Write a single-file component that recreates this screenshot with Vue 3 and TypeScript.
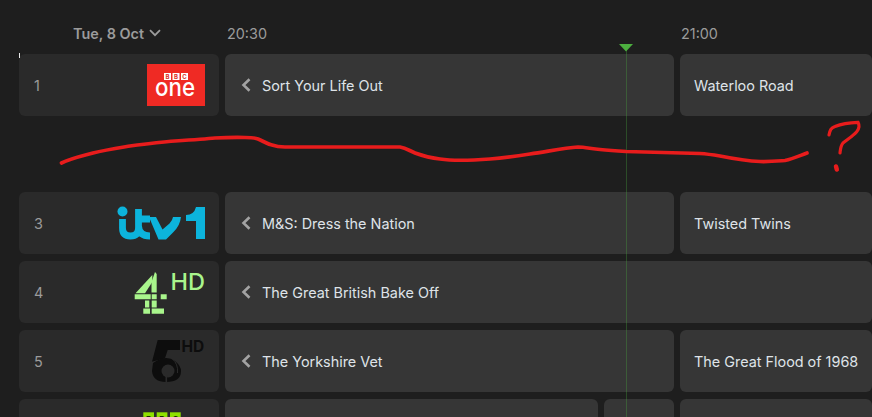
<script setup lang="ts">
interface Prog { title: string; width?: number; grow?: boolean; back?: boolean }
interface Row { num: string; logo: string; progs: Prog[] }
const rows: Row[] = [
  { num: '1', logo: 'one', progs: [{ title: 'Sort Your Life Out', width: 449, back: true }, { title: 'Waterloo Road', grow: true }] },
  { num: '', logo: '', progs: [] },
  { num: '3', logo: 'itv', progs: [{ title: 'M&S: Dress the Nation', width: 449, back: true }, { title: 'Twisted Twins', grow: true }] },
  { num: '4', logo: 'c4', progs: [{ title: 'The Great British Bake Off', grow: true, back: true }] },
  { num: '5', logo: 'c5', progs: [{ title: 'The Yorkshire Vet', width: 449, back: true }, { title: 'The Great Flood of 1968', grow: true }] },
  { num: '', logo: 'bbc', progs: [{ title: '', width: 373 }, { title: '', width: 70 }, { title: '', grow: true }] }
]
</script>

<template>
  <div class="epg">
    <header class="head">
      <div class="date">Tue, 8 Oct
        <svg class="chev" width="12" height="8" viewBox="0 0 12 8"><path d="M1 1.2 6 6.2l5-5" fill="none" stroke="currentColor" stroke-width="1.8" /></svg>
      </div>
      <div class="time">20:30</div>
      <div class="time">21:00</div>
    </header>
    <div class="rows">
      <span class="tick"></span>
      <div class="now">
        <svg width="14" height="8" viewBox="0 0 14 8"><path d="M0 0h14L7 7.5z" fill="#4caf3f" /></svg>
      </div>
      <template v-for="(r, i) in rows" :key="i">
        <div v-if="!r.logo" class="row blank"></div>
        <div v-else class="row">
          <div class="chan">
            <span class="num">{{ r.num }}</span>
            <svg v-if="r.logo === 'one'" width="58" height="42" viewBox="147 64 58 42">
              <rect x="147" y="64" width="58" height="42" fill="#ef2a24" />
              <g fill="#fff">
                <rect x="164" y="73" width="7" height="7" /><rect x="172.5" y="73" width="7" height="7" /><rect x="181" y="73" width="7" height="7" />
              </g>
              <g class="bbcred">
                <text x="167.5" y="78.7">B</text><text x="176" y="78.7">B</text><text x="184.5" y="78.7">C</text>
              </g>
              <text x="155" y="96" textLength="40" lengthAdjust="spacingAndGlyphs" class="onetxt">one</text>
            </svg>
            <svg v-else-if="r.logo === 'itv'" width="90" height="40" viewBox="115 203 90 40">
              <circle cx="122.5" cy="211.5" r="5" fill="#0cb4dc" />
              <path d="M122.5 219V228Q122.5 236 130.5 236 138.5 236 138.5 228V209M138.5 219H150M138.5 226Q139 236 150 236" fill="none" stroke="#0cb4dc" stroke-width="6.8" />
              <path d="M149 217h7l6.500 12.500 7-6q3-3 3.500-6.500h8q-1 9-8 15.500l-7 7h-7.500z" fill="#0cb4dc" />
              <path d="M205 207V239H196V221H186V215Q194 215 196 207Z" fill="#0cb4dc" />
            </svg>
            <svg v-else-if="r.logo === 'c4'" width="71" height="50" viewBox="134 267 71 50">
              <g fill="#a9f58c">
                <path d="M152.300 275v7l-7.300 11.300h-9.500z" />
                <path d="M155 272l1.700 2v18.500h-5.200V282z" />
                <path d="M134.700 294.300h16v5h-16zM151.700 294.300h5v5h-5zM160.700 294.300h6v5h-6z" />
                <path d="M151.700 300.500h5v7h-5zM145 300.500h4.300v7H145z" />
                <path d="M143.300 308.500h6.700v5.200h-6.700zM151.700 308.500h12.300v5.200h-12.300z" />
              </g>
              <text x="170.500" y="289.500" class="hd green">HD</text>
            </svg>
            <svg v-else-if="r.logo === 'c5'" width="55" height="46" viewBox="150 338 55 46">
              <g fill="#0d0d0d">
                <path d="M157.700 340H180V350H167.700L165 358.300 152 361.700Z" />
                <path d="M153 363Q166 354 175 361 181 366 181 371 181 382 166 382 153 382 152 371Z" />
              </g>
              <circle cx="168" cy="371" r="6.500" fill="#2a2a2a" />
              <rect x="165.500" y="375" width="1.600" height="8" fill="#2a2a2a" />
              <path d="M172 358.500Q178.500 364 177.500 373" fill="none" stroke="#2a2a2a" stroke-width="1" />
              <text x="181.500" y="352" class="hd dark">HD</text>
            </svg>
            <svg v-else width="62" height="36" viewBox="143 412 62 36">
              <rect x="143.300" y="412.300" width="10.700" height="11" fill="#8fe000" /><rect x="156.700" y="412.300" width="10.700" height="11" fill="#8fe000" /><rect x="170" y="412.300" width="10.700" height="11" fill="#8fe000" />
              <g class="bbcdark">
                <text x="148.650" y="421.500">B</text><text x="162" y="421.500">B</text><text x="175.350" y="421.500">C</text>
              </g>
            </svg>
          </div>
          <div v-for="(p, j) in r.progs" :key="j" class="prog" :class="{ grow: p.grow }" :style="p.width ? { width: p.width + 'px' } : undefined">
            <svg v-if="p.back" class="back" width="10" height="14" viewBox="0 0 10 14"><path d="M8.500 1.200 2.500 7 8.500 12.800" fill="none" stroke="currentColor" stroke-width="2.600" /></svg>
            <span v-if="p.title">{{ p.title }}</span>
          </div>
        </div>
      </template>
      <svg class="scribble" width="872" height="70" viewBox="0 120 872 70">
        <path d="M61.500 163C72 158 82 156 93 153 105 150 118 148 130 146 145 144 160 142 175 141 190 140 205 139 215 138 225 137.500 235 137.300 245 137.500 251 137.600 255 138 258 139 263 141 267 144 272 145 276 146.500 280 147 285 147L400 147C406 148 410 151 415 153 423 156 430 158 440 159 450 160.500 470 160.500 490 159 505 158 518 156 530 154 550 151 565 148 578 147 585 147 592 149 600 149.500 610 150.500 618 151 626 151.500L700 153.500C708 154 714 155 720 156 735 159 748 161 760 161.500 770 161.800 778 161 785 160.500 793 159 800 155.500 807 153" fill="none" stroke="#e81c1c" stroke-width="3.700" stroke-linecap="round" />
        <path d="M829 135C830 130 831 128 835 126.500 842 123.500 850 122.500 858 122.300 860 126 859 129 856.700 131.700 853 136 848 139 843 143 840.500 146 840.500 149 840 153" fill="none" stroke="#e81c1c" stroke-width="3.200" stroke-linecap="round" />
        <path d="M836 166.500l.8 3" fill="none" stroke="#e81c1c" stroke-width="4.500" stroke-linecap="round" />
      </svg>
    </div>
  </div>
</template>

<style>
html, body { margin: 0; background: #1e1e1e; }
</style>

<style scoped>
.epg {
  width: 872px;
  height: 417px;
  overflow: hidden;
  background: #1e1e1e;
  font-family: Inter, "Liberation Sans", sans-serif;
}
.head {
  display: flex;
  align-items: center;
  height: 54px;
  padding: 12px 0 0 19px;
  box-sizing: border-box;
  color: #9b9b9b;
  font-size: 14.4px;
}
.date {
  flex: none;
  width: 208px;
  box-sizing: border-box;
  padding-left: 54px;
  font-weight: 600;
  display: flex;
  align-items: center;
  gap: 5px;
}
.time { flex: none; width: 454px; }
.rows {
  position: relative;
  display: flex;
  flex-direction: column;
  gap: 7px;
  padding-left: 19px;
}
.row {
  display: flex;
  gap: 6px;
  height: 62px;
  flex: none;
}
.chan {
  width: 200px;
  flex: none;
  box-sizing: border-box;
  background: #2a2a2a;
  border-radius: 6px;
  display: flex;
  align-items: center;
  justify-content: space-between;
  padding: 0 14px 0 15px;
  color: #9b9b9b;
  font-size: 14.4px;
}
.chan svg { display: block; flex: none; }
.prog {
  flex: none;
  box-sizing: border-box;
  background: #363636;
  border-radius: 6px;
  display: flex;
  align-items: center;
  padding-left: 14px;
  color: #dfe3e8;
  font-size: 14.4px;
  white-space: nowrap;
}
.grow { flex: 1 0 0; }
.back { color: #a3a3a3; margin: 0 11px 0 2px; flex: none; }
.tick {
  position: absolute;
  left: 19px;
  top: -1px;
  width: 1px;
  height: 5px;
  background: #e8e8e8;
  z-index: 1;
}
.now {
  position: absolute;
  left: 626px;
  top: -10px;
  bottom: -40px;
  width: 1px;
  background: rgba(76, 175, 63, 0.32);
  z-index: 2;
}
.now svg { position: absolute; left: -7px; top: 0; }
.scribble { position: absolute; left: 0; top: 66px; z-index: 3; }
.onetxt { font: 500 25px Inter, sans-serif; fill: #fff; }
.bbcred text { font: 700 6px Inter, sans-serif; fill: #d9302a; text-anchor: middle; }
.bbcdark text { font: 700 8px Inter, sans-serif; fill: #1a2a00; text-anchor: middle; }
.hd { font: 500 23.5px Inter, sans-serif; }
.green { fill: #a9f58c; }
.dark { font-size: 15.5px; font-weight: 700; fill: #0d0d0d; }
</style>
